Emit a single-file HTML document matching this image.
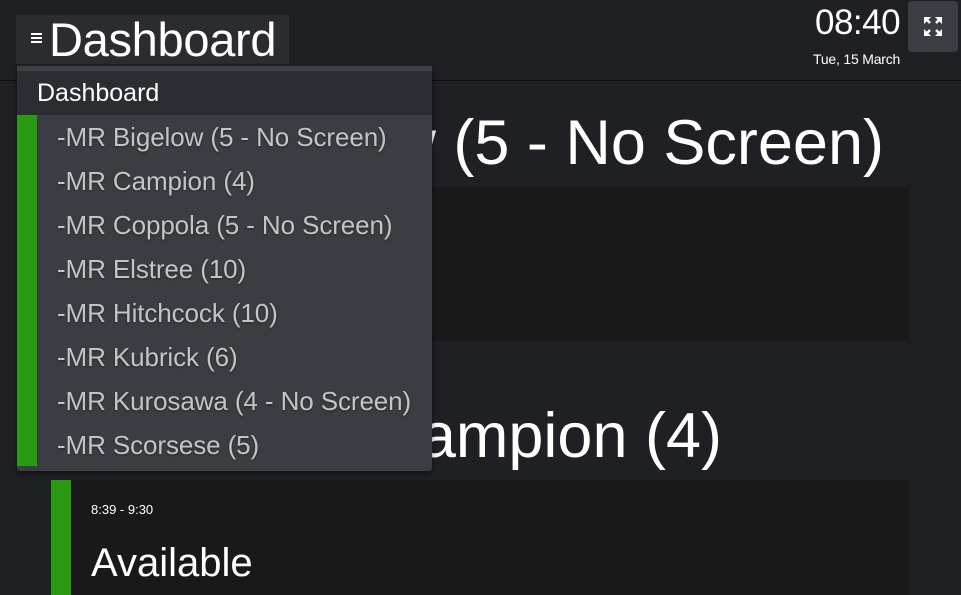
<!DOCTYPE html>
<html><head><style>
body{margin:0;width:961px;height:595px;background:#1f2023;font-family:"Liberation Sans",sans-serif;position:relative;overflow:hidden;color:#fff}
.a{position:absolute}
.hdr{left:0;top:0;width:961px;height:80px;border-bottom:1px solid #111}
.title{left:16px;top:15px;width:273px;height:49px;background:#2a2c30}
.title span{position:absolute;left:33px;top:0;font-size:47px;line-height:50px;color:#fff;letter-spacing:-0.3px}
.ham{left:31px;top:33px;width:11px}
.ham i{display:block;height:2px;background:#fff;margin-bottom:2px}
.big{font-size:63px;white-space:nowrap;color:#fff}
.panel{background:#19191a}
.dd{left:17px;top:66px;width:415px;height:405px;background:#3a3e43;border-radius:0 0 3px 3px;box-shadow:0 2px 6px rgba(0,0,0,.5)}
.dd .top{position:absolute;left:0;top:0;width:415px;height:5px;background:#3c4045}
.dd .head{position:absolute;left:0;top:5px;width:415px;height:44px;background:#2a2d31;font-size:25px;line-height:44px;color:#fff;text-indent:20px}
.dd .bar{position:absolute;left:0;top:49px;width:20px;height:351px;background:#2a9a12}
.dd .it{position:absolute;left:40px;font-size:26px;letter-spacing:-0.1px;color:#c4c4c4;white-space:nowrap;text-shadow:0 1px 2px rgba(0,0,0,.4)}
</style></head><body>
<div class="a hdr"></div>
<div class="a title"><span>Dashboard</span></div>
<div class="a ham"><i></i><i></i><i></i></div>
<div class="a" style="left:815px;top:3px;font-size:35px;line-height:40px;letter-spacing:-0.5px">08:40</div>
<div class="a" style="left:813px;top:51px;font-size:14px;line-height:16px;letter-spacing:-0.2px">Tue, 15 March</div>
<div class="a" style="left:908px;top:1px;width:50px;height:51px;background:#3a3d42;border-radius:4px">
<svg width="50" height="51" viewBox="0 0 50 51"><g fill="#fff"><path d="M16 16h7l-7 7z M34 16h-7l7 7z M16 35h7l-7-7z M34 35h-7l7-7z"/></g><g stroke="#fff" stroke-width="2.5"><path d="M18 18l4 4M32 18l-4 4M18 33l4-4M32 33l-4-4"/></g></svg></div>
<div class="a big" style="right:77px;top:108px;line-height:70px">MR Bigelow (5 - No Screen)</div>
<div class="a panel" style="left:51px;top:187px;width:858px;height:154px"></div>
<div class="a big" style="right:239px;top:401px;line-height:70px">MR Campion (4)</div>
<div class="a panel" style="left:51px;top:480px;width:858px;height:115px"></div>
<div class="a" style="left:51px;top:480px;width:20px;height:115px;background:#2a9a12"></div>
<div class="a" style="left:91px;top:502px;font-size:13px">8:39 - 9:30</div>
<div class="a" style="left:91px;top:541px;font-size:40px">Available</div>
<div class="a dd"><div class="top"></div><div class="head">Dashboard</div><div class="bar"></div>
<div class="it" style="top:56px">-MR Bigelow (5 - No Screen)</div>
<div class="it" style="top:100px">-MR Campion (4)</div>
<div class="it" style="top:144px">-MR Coppola (5 - No Screen)</div>
<div class="it" style="top:188px">-MR Elstree (10)</div>
<div class="it" style="top:232px">-MR Hitchcock (10)</div>
<div class="it" style="top:276px">-MR Kubrick (6)</div>
<div class="it" style="top:320px">-MR Kurosawa (4 - No Screen)</div>
<div class="it" style="top:364px">-MR Scorsese (5)</div>
</div>
</body></html>
